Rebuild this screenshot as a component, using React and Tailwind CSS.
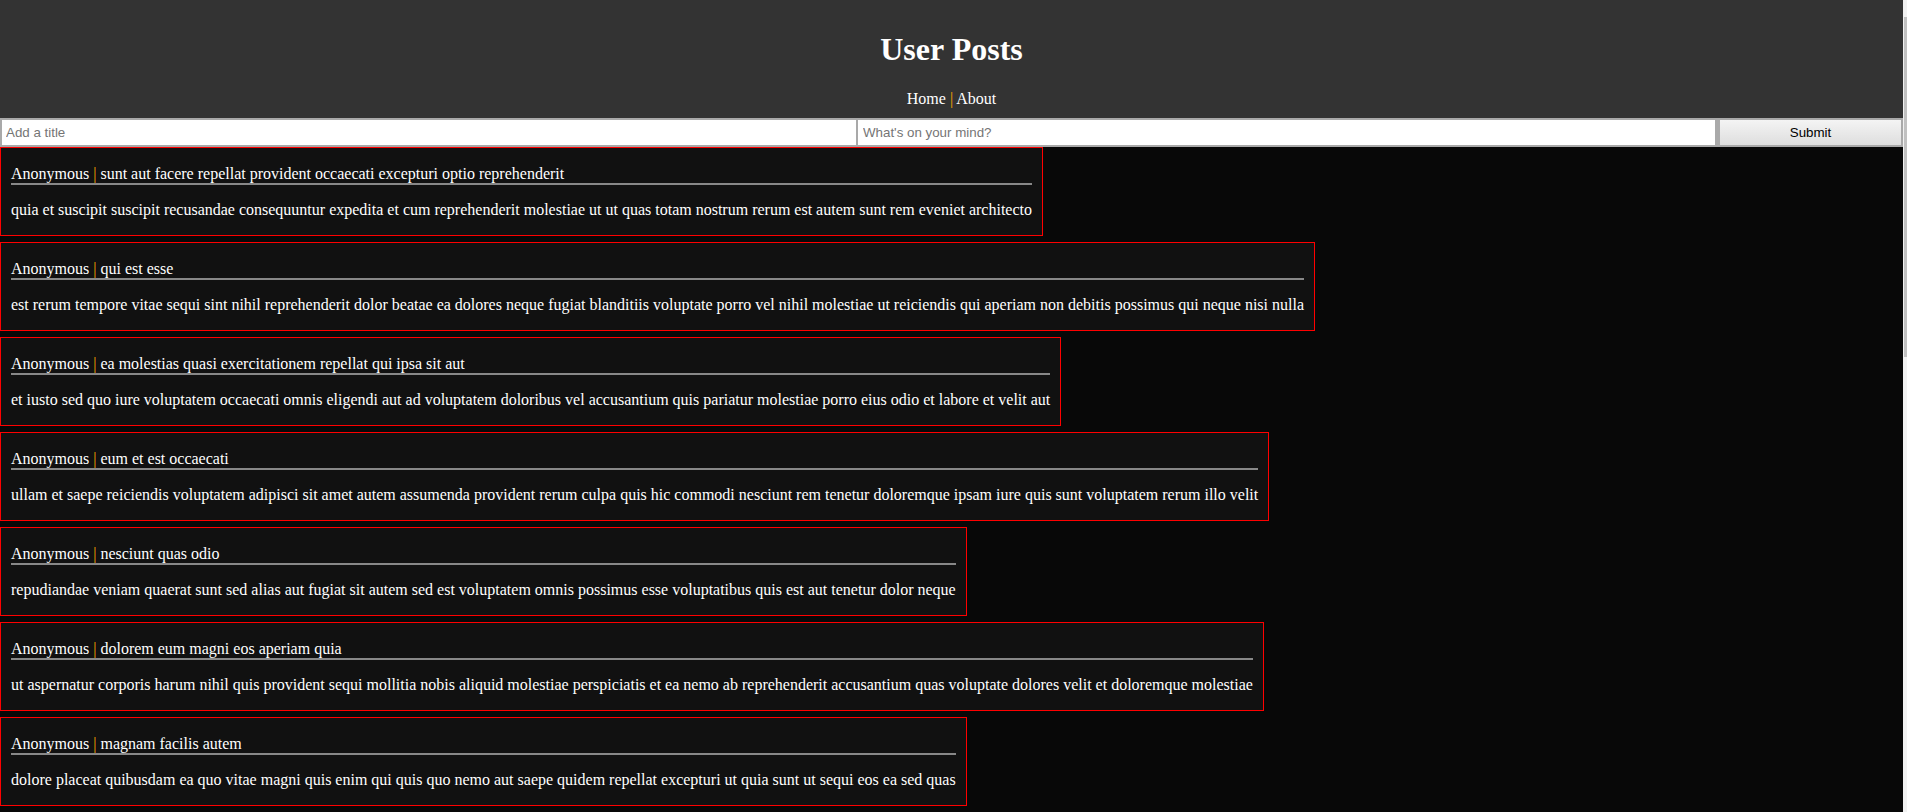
import { useState } from 'react';

const posts = [
  {
    title: 'sunt aut facere repellat provident occaecati excepturi optio reprehenderit',
    body: 'quia et suscipit suscipit recusandae consequuntur expedita et cum reprehenderit molestiae ut ut quas totam nostrum rerum est autem sunt rem eveniet architecto'
  },
  {
    title: 'qui est esse',
    body: 'est rerum tempore vitae sequi sint nihil reprehenderit dolor beatae ea dolores neque fugiat blanditiis voluptate porro vel nihil molestiae ut reiciendis qui aperiam non debitis possimus qui neque nisi nulla'
  },
  {
    title: 'ea molestias quasi exercitationem repellat qui ipsa sit aut',
    body: 'et iusto sed quo iure voluptatem occaecati omnis eligendi aut ad voluptatem doloribus vel accusantium quis pariatur molestiae porro eius odio et labore et velit aut'
  },
  {
    title: 'eum et est occaecati',
    body: 'ullam et saepe reiciendis voluptatem adipisci sit amet autem assumenda provident rerum culpa quis hic commodi nesciunt rem tenetur doloremque ipsam iure quis sunt voluptatem rerum illo velit'
  },
  {
    title: 'nesciunt quas odio',
    body: 'repudiandae veniam quaerat sunt sed alias aut fugiat sit autem sed est voluptatem omnis possimus esse voluptatibus quis est aut tenetur dolor neque'
  },
  {
    title: 'dolorem eum magni eos aperiam quia',
    body: 'ut aspernatur corporis harum nihil quis provident sequi mollitia nobis aliquid molestiae perspiciatis et ea nemo ab reprehenderit accusantium quas voluptate dolores velit et doloremque molestiae'
  },
  {
    title: 'magnam facilis autem',
    body: 'dolore placeat quibusdam ea quo vitae magni quis enim qui quis quo nemo aut saepe quidem repellat excepturi ut quia sunt ut sequi eos ea sed quas'
  }
];

function Post({ post }) {
  return (
    <div className="w-fit border border-[#ff0000] bg-[#111111] px-[10px] mb-[6px]">
      <p className="mt-[17px] border-b-2 border-[#888888] text-white">
        Anonymous <span className="text-[#ffa500]">|</span> {post.title}
      </p>
      <p className="my-[16px] text-white">{post.body}</p>
    </div>
  );
}

function App() {
  const [title, setTitle] = useState('');
  const [body, setBody] = useState('');

  return (
    <div className="flex h-[812px] overflow-hidden bg-[#080808] font-['Liberation_Serif',serif] text-[16px] leading-[normal]">
      <div className="flex-1 min-w-0">
        <header className="bg-[#333333] py-[10px] text-center text-white">
          <h1 className="my-[21.44px] text-[32px] font-bold">User Posts</h1>
          <nav>
            <a className="text-white">Home</a>{' '}
            <span className="text-[#ffa500]">|</span>{' '}
            <a className="text-white">About</a>
          </nav>
        </header>

        <form className="flex font-['Liberation_Sans',Arial,sans-serif] text-[13.33px]" onSubmit={(e) => e.preventDefault()}>
          <input
            value={title}
            onChange={(e) => setTitle(e.target.value)}
            placeholder="Add a title"
            className="w-[858px] h-[29px] bg-white border-2 border-[#a9a9a9] px-[4px] text-black placeholder:text-[#757575] outline-none"
          />
          <input
            value={body}
            onChange={(e) => setBody(e.target.value)}
            placeholder="What's on your mind?"
            className="w-[859px] h-[29px] bg-white border-2 border-l-0 border-[#a9a9a9] px-[5px] text-black placeholder:text-[#757575] outline-none"
          />
          <button
            type="submit"
            className="flex-1 h-[29px] border-2 border-l-[3px] border-[#a9a9a9] bg-gradient-to-b from-[#f4f4f4] to-[#dedede] text-black"
          >
            Submit
          </button>
        </form>

        <div>
          {posts.map((p, i) => (
            <Post key={i} post={p} />
          ))}
        </div>
      </div>
      <div className="w-[4px] bg-[#f1f1f1] pt-[17px]">
        <div className="h-[340px] w-[3px] ml-[1px] bg-[#c1c1c1]" />
      </div>
    </div>
  );
}

export default App;
